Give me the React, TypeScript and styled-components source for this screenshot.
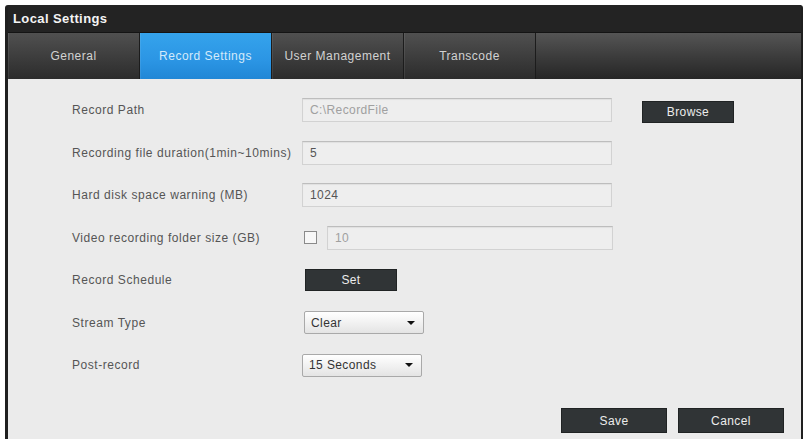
import React from 'react';
import styled, { createGlobalStyle } from 'styled-components';

const GlobalStyle = createGlobalStyle`
  html, body {
    margin: 0;
    padding: 0;
    background: #ffffff;
  }
  body {
    font-family: 'Liberation Sans', Arial, sans-serif;
  }
`;

const Frame = styled.div`
  margin: 5px 3px 0 5px;
  width: 798px;
  height: 434px;
  display: flex;
  flex-direction: column;
  background: #1f1f1f;
  border-radius: 3px 3px 0 0;
  box-sizing: border-box;
  padding: 0 2px 0 3px;
`;

const TitleBar = styled.div`
  height: 27px;
  display: flex;
  align-items: center;
  padding-left: 5px;
  background: #232323;
  color: #f4f4f4;
  font-size: 13px;
  font-weight: bold;
  letter-spacing: 0.4px;
`;

const TabBar = styled.div`
  height: 46px;
  display: flex;
  background: linear-gradient(#555555, #3a3a3a 55%, #262626);
  border-top: 1px solid #141414;
`;

const Tab = styled.div<{ $active?: boolean }>`
  width: 131px;
  display: flex;
  align-items: center;
  justify-content: center;
  font-size: 12px;
  letter-spacing: 0.5px;
  color: ${p => (p.$active ? '#d3eafa' : '#d2d2d2')};
  background: ${p =>
    p.$active
      ? 'linear-gradient(#35a3ec, #2b95e4 60%, #2187d6)'
      : 'linear-gradient(#505050, #3c3c3c 55%, #2c2c2c)'};
  border-right: 1px solid #1c1c1c;
  box-shadow: inset 1px 0 0 rgba(255, 255, 255, 0.08);
`;

const Content = styled.div`
  flex: 1;
  background: #ebebeb;
  display: flex;
  flex-direction: column;
  padding: 10px 0 0 64px;
`;

const Row = styled.div`
  height: 42.5px;
  display: grid;
  grid-template-columns: 230px 1fr;
  align-items: center;
`;

const Label = styled.div`
  font-size: 12px;
  color: #555555;
  letter-spacing: 0.55px;
`;

const Field = styled.div`
  display: flex;
  align-items: center;
  gap: 8px;
`;

const TextBox = styled.div<{ $width: number; $muted?: boolean }>`
  width: ${p => p.$width}px;
  height: 24px;
  box-sizing: border-box;
  display: flex;
  align-items: center;
  padding-left: 7px;
  font-size: 12px;
  letter-spacing: 0.4px;
  color: ${p => (p.$muted ? '#a0a0a0' : '#555555')};
  background: #eeeeee;
  border: 1px solid #d2d2d2;
  border-top-color: #bdbdbd;
  box-shadow: inset 0 1px 1px rgba(0, 0, 0, 0.06);
`;

const Check = styled.div`
  width: 13px;
  height: 13px;
  box-sizing: border-box;
  border: 1px solid #8a8a8a;
  background: #f7f7f7;
  margin: 0 2px;
`;

const DarkButton = styled.div<{ $width: number; $height?: number }>`
  width: ${p => p.$width}px;
  height: ${p => p.$height ?? 22}px;
  box-sizing: border-box;
  display: flex;
  align-items: center;
  justify-content: center;
  background: #303436;
  border: 1px solid #202324;
  color: #ececec;
  font-size: 12px;
  letter-spacing: 0.4px;
`;

const Select = styled.div`
  width: 120px;
  height: 23px;
  box-sizing: border-box;
  display: flex;
  align-items: center;
  justify-content: space-between;
  padding: 0 8px 0 6px;
  font-size: 12px;
  letter-spacing: 0.4px;
  color: #333333;
  background: linear-gradient(#ffffff, #e4e4e4);
  border: 1px solid #a9a9a9;
  border-radius: 2px;
`;

const Caret = styled.span`
  width: 0;
  height: 0;
  border-left: 4px solid transparent;
  border-right: 4px solid transparent;
  border-top: 4px solid #111111;
`;

const Footer = styled.div`
  flex: 1;
  display: flex;
  justify-content: flex-end;
  align-items: flex-end;
  gap: 11px;
  padding: 0 17px 6px 0;
`;

const App: React.FC = () => {
  return (
    <>
      <GlobalStyle />
      <Frame>
        <TitleBar>Local Settings</TitleBar>
        <TabBar>
          <Tab>General</Tab>
          <Tab $active>Record Settings</Tab>
          <Tab>User Management</Tab>
          <Tab>Transcode</Tab>
        </TabBar>
        <Content>
          <Row>
            <Label>Record Path</Label>
            <Field>
              <TextBox $width={310} $muted>C:\RecordFile</TextBox>
              <DarkButton $width={92} style={{ marginLeft: 22, marginTop: 3 }}>
                Browse
              </DarkButton>
            </Field>
          </Row>
          <Row>
            <Label>Recording file duration(1min~10mins)</Label>
            <Field>
              <TextBox $width={310}>5</TextBox>
            </Field>
          </Row>
          <Row>
            <Label>Hard disk space warning (MB)</Label>
            <Field>
              <TextBox $width={310}>1024</TextBox>
            </Field>
          </Row>
          <Row>
            <Label>Video recording folder size (GB)</Label>
            <Field>
              <Check />
              <TextBox $width={286} $muted>
                10
              </TextBox>
            </Field>
          </Row>
          <Row>
            <Label>Record Schedule</Label>
            <Field>
              <DarkButton $width={92} style={{ marginLeft: 3 }}>
                Set
              </DarkButton>
            </Field>
          </Row>
          <Row>
            <Label>Stream Type</Label>
            <Field>
              <Select style={{ marginLeft: 2 }}>
                Clear
                <Caret />
              </Select>
            </Field>
          </Row>
          <Row>
            <Label>Post-record</Label>
            <Field>
              <Select>
                15 Seconds
                <Caret />
              </Select>
            </Field>
          </Row>
          <Footer>
            <DarkButton $width={106} $height={25}>
              Save
            </DarkButton>
            <DarkButton $width={106} $height={25}>
              Cancel
            </DarkButton>
          </Footer>
        </Content>
      </Frame>
    </>
  );
};

export default App;
